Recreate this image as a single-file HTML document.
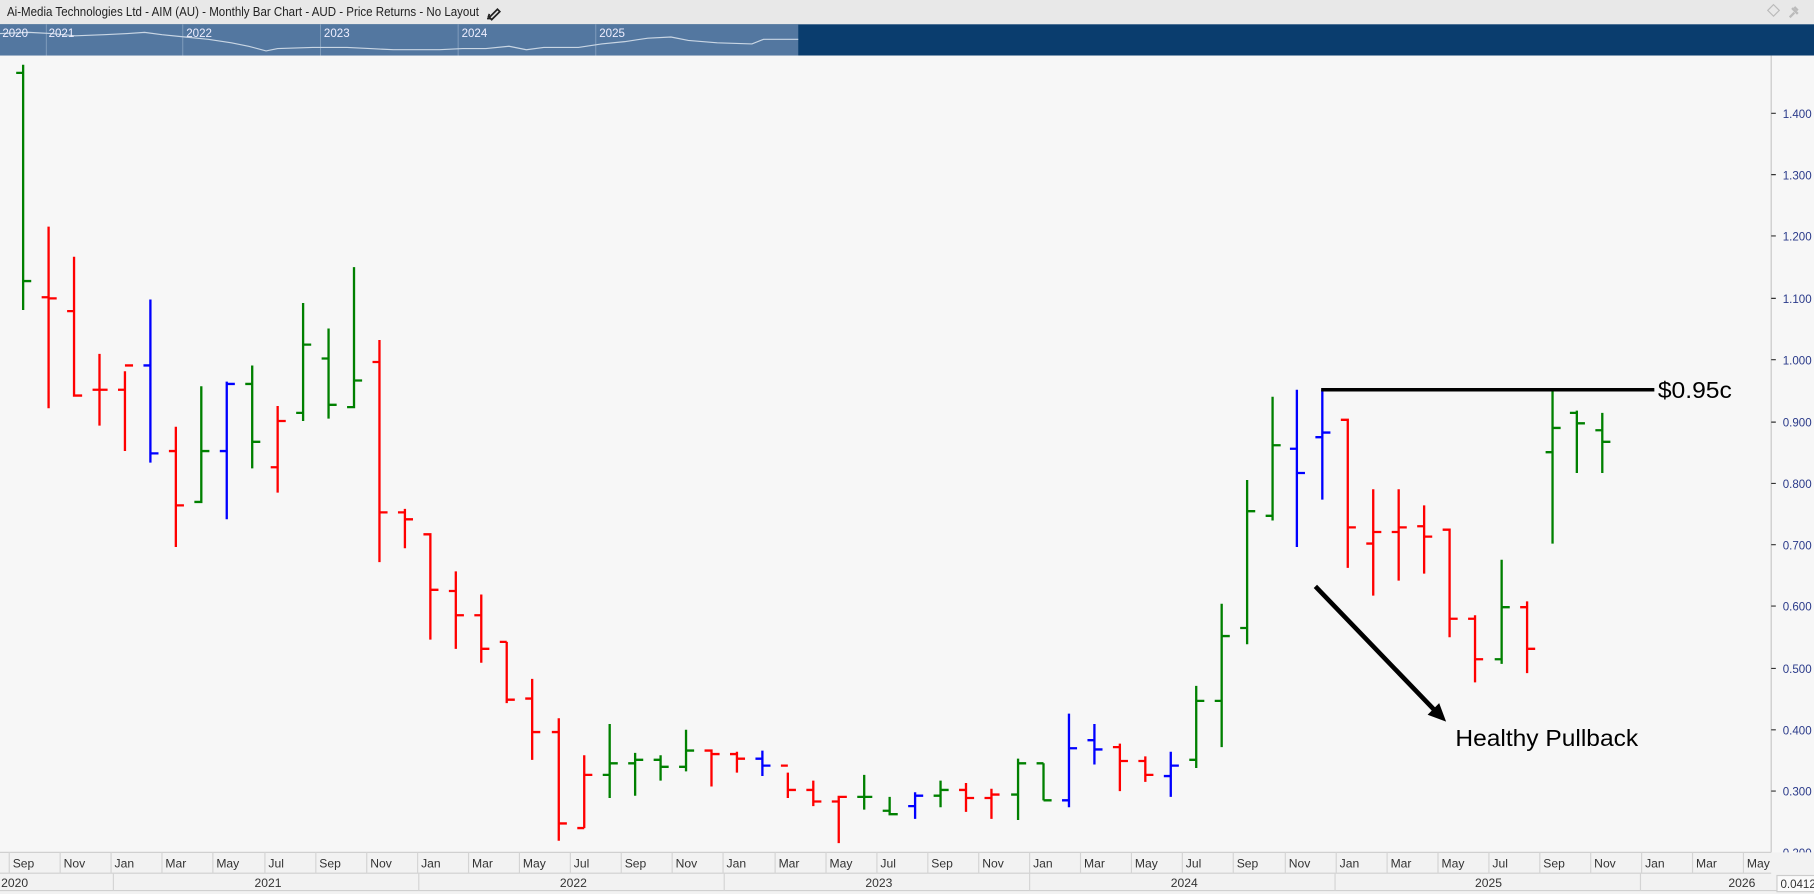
<!DOCTYPE html>
<html><head><meta charset="utf-8"><style>
html,body{margin:0;padding:0;width:1814px;height:894px;overflow:hidden;background:#f7f7f7}
svg{display:block}
text{font-family:"Liberation Sans",sans-serif}
</style></head><body>
<svg width="1814" height="894" viewBox="0 0 1568 773" preserveAspectRatio="none" xmlns="http://www.w3.org/2000/svg">
<rect x="0" y="0" width="1568" height="773" fill="#f7f7f7"/>
<rect x="0" y="0" width="1568" height="21" fill="#e8e8e8"/>
<text x="6" y="14" font-size="11.5" fill="#222" textLength="408" lengthAdjust="spacingAndGlyphs">Ai-Media Technologies Ltd - AIM (AU) - Monthly Bar Chart - AUD - Price Returns - No Layout</text>
<path d="M423 15l7-7 2 2-7 7zM421 16h3M422 15l1-3" stroke="#222" stroke-width="1.5" fill="none"/>
<path d="M1533 4l5 5-5 5-5-5z" stroke="#bbb" fill="none"/>
<path d="M1547 15l4-4M1549 7l5 5M1551 6l3 3" stroke="#bbb" stroke-width="2"/>
<rect x="0" y="21" width="1568" height="27" fill="#0a3d6e"/>
<rect x="0" y="21" width="690" height="27" fill="#5377a0"/>
<g stroke="#8aa4c2" stroke-width="0.7"><path d="M40 21V48M158 21V48M277 21V48M396 21V48M515 21V48"/></g>
<path d="M0 29 L25 28 L45 29 L65 31 L90 30 L110 29 L125 28 L140 30 L160 32 L180 34 L200 37 L215 40 L230 44 L240 42 L270 41 L300 41 L320 42 L340 43 L360 43 L380 43 L400 42 L420 42 L440 40 L455 43 L470 41 L500 41 L520 38 L540 36 L560 33 L580 32 L595 35 L620 37 L650 38 L660 34 L690 34" stroke="#c9d6e4" stroke-width="1" fill="none"/>
<g font-size="10" fill="#eef">
<text x="2" y="32">2020</text><text x="42" y="32">2021</text><text x="161" y="32">2022</text><text x="280" y="32">2023</text><text x="399" y="32">2024</text><text x="518" y="32">2025</text></g>
<line x1="1531" y1="48" x2="1531" y2="737" stroke="#c8c8c8"/>
<g font-size="10" fill="#2a3a8a">
<text x="1541" y="102">1.400</text><text x="1541" y="155">1.300</text><text x="1541" y="208">1.200</text><text x="1541" y="262">1.100</text><text x="1541" y="315">1.000</text><text x="1541" y="369">0.900</text><text x="1541" y="422">0.800</text><text x="1541" y="475">0.700</text><text x="1541" y="528">0.600</text><text x="1541" y="582">0.500</text><text x="1541" y="635">0.400</text><text x="1541" y="688">0.300</text><text x="1541" y="741">0.200</text></g>
<g stroke="#333"><path d="M1531 98h4M1531 151h4M1531 204h4M1531 258h4M1531 311h4M1531 365h4M1531 418h4M1531 471h4M1531 524h4M1531 578h4M1531 631h4M1531 684h4"/></g>
<g fill="none" stroke-width="2">
<path stroke="#008000" d="M20 56V268M14 63H20M20 243H27 M174 334V435M168 434H174M174 390H181 M218 316V405M212 332H218M218 382H225 M262 262V364M256 357H262M262 298H269 M284 284V362M278 310H284M284 350H291 M306 231V353M300 352H306M306 329H313 M527 626V690M521 670H527M527 660H534 M549 651V688M543 660H549M549 657H556 M571 653V675M565 657H571M571 663H578 M593 631V667M587 663H593M593 649H600 M747 670V700M741 689H747M747 689H754 M769 689V705M763 701H769M769 704H776 M813 675V698M807 688H813M813 683H820 M880 656V709M874 687H880M880 660H887 M902 660V692M896 660H902M902 692H909 M1034 593V664M1028 657H1034M1034 606H1041 M1056 522V646M1050 606H1056M1056 550H1063 M1078 415V557M1072 543H1078M1078 442H1085 M1100 343V450M1094 446H1100M1100 385H1107 M1298 484V574M1292 570H1298M1298 525H1305 M1342 337V470M1336 391H1342M1342 370H1349 M1363 355V409M1357 357H1363M1363 366H1370 M1385 357V409M1379 372H1385M1385 382H1392"/>
<path stroke="#0000ff" d="M130 259V400M124 316H130M130 392H137 M196 330V449M190 390H196M196 332H203 M659 649V671M653 656H659M659 662H666 M791 685V708M785 697H791M791 688H798 M924 617V698M918 692H924M924 647H931 M946 626V661M940 640H946M946 648H953 M1012 650V689M1006 671H1012M1012 662H1019 M1121 337V473M1115 388H1121M1121 409H1128 M1143 337V432M1137 378H1143M1143 374H1150"/>
<path stroke="#ff0000" d="M42 196V353M36 257H42M42 258H49 M64 222V343M58 269H64M64 342H71 M86 306V368M80 337H86M86 337H93 M108 321V390M102 337H108M108 316H115 M152 369V473M146 390H152M152 437H159 M240 351V426M234 404H240M240 364H247 M328 294V486M322 313H328M328 443H335 M350 440V474M344 443H350M350 449H357 M372 461V553M366 462H372M372 510H379 M394 494V561M388 511H394M394 532H401 M416 514V573M410 532H416M416 561H423 M438 555V608M432 555H438M438 605H445 M460 587V657M454 604H460M460 633H467 M483 621V727M477 633H483M483 712H490 M505 653V716M499 716H505M505 670H512 M615 648V680M609 649H615M615 652H622 M637 650V668M631 652H637M637 656H644 M681 668V690M675 662H681M681 683H688 M703 675V697M697 683H703M703 693H710 M725 688V729M719 693H725M725 689H732 M835 677V702M829 683H835M835 690H842 M857 682V708M851 690H857M857 687H864 M968 643V684M962 646H968M968 658H975 M990 654V676M984 658H990M990 670H997 M1165 362V491M1159 363H1165M1165 456H1172 M1187 423V515M1181 470H1187M1187 460H1194 M1209 423V502M1203 460H1209M1209 456H1216 M1231 437V496M1225 455H1231M1231 464H1238 M1253 457V551M1247 458H1253M1253 535H1260 M1275 532V590M1269 535H1275M1275 570H1282 M1320 520V582M1314 525H1320M1320 561H1327"/>
</g>
<line x1="1142" y1="337" x2="1430" y2="337" stroke="#000" stroke-width="3"/>
<text x="1433" y="344" font-size="20" fill="#000" textLength="64" lengthAdjust="spacingAndGlyphs" font-family="DejaVu Sans,sans-serif">$0.95c</text>
<line x1="1137" y1="507" x2="1240" y2="614" stroke="#000" stroke-width="4"/>
<path d="M1250 624 L1234 618 L1244 608 Z" fill="#000"/>
<text x="1258" y="645" font-size="20" fill="#000" textLength="158" lengthAdjust="spacingAndGlyphs" font-family="DejaVu Sans,sans-serif">Healthy Pullback</text>
<rect x="0" y="737" width="1568" height="36" fill="#f2f2f2"/>
<g stroke="#d0d0d0"><path d="M0 737H1531M0 755H1531M0 770H1568"/></g>
<g stroke="#d4d4d4"><path d="M8 737v18M52 737v18M96 737v18M140 737v18M184 737v18M229 737v18M273 737v18M317 737v18M361 737v18M405 737v18M449 737v18M493 737v18M537 737v18M581 737v18M625 737v18M670 737v18M714 737v18M758 737v18M802 737v18M846 737v18M890 737v18M934 737v18M978 737v18M1022 737v18M1066 737v18M1111 737v18M1155 737v18M1199 737v18M1243 737v18M1287 737v18M1331 737v18M1375 737v18M1419 737v18M1463 737v18M1507 737v18 M98 755v15M362 755v15M626 755v15M890 755v15M1154 755v15M1418 755v15"/></g>
<g font-size="10.5" fill="#333">
<text x="11" y="750">Sep</text><text x="55" y="750">Nov</text><text x="99" y="750">Jan</text><text x="143" y="750">Mar</text><text x="187" y="750">May</text><text x="232" y="750">Jul</text><text x="276" y="750">Sep</text><text x="320" y="750">Nov</text><text x="364" y="750">Jan</text><text x="408" y="750">Mar</text><text x="452" y="750">May</text><text x="496" y="750">Jul</text><text x="540" y="750">Sep</text><text x="584" y="750">Nov</text><text x="628" y="750">Jan</text><text x="673" y="750">Mar</text><text x="717" y="750">May</text><text x="761" y="750">Jul</text><text x="805" y="750">Sep</text><text x="849" y="750">Nov</text><text x="893" y="750">Jan</text><text x="937" y="750">Mar</text><text x="981" y="750">May</text><text x="1025" y="750">Jul</text><text x="1069" y="750">Sep</text><text x="1114" y="750">Nov</text><text x="1158" y="750">Jan</text><text x="1202" y="750">Mar</text><text x="1246" y="750">May</text><text x="1290" y="750">Jul</text><text x="1334" y="750">Sep</text><text x="1378" y="750">Nov</text><text x="1422" y="750">Jan</text><text x="1466" y="750">Mar</text><text x="1510" y="750">May</text>
<text x="1" y="767">2020</text><text x="220" y="767">2021</text><text x="484" y="767">2022</text><text x="748" y="767">2023</text><text x="1012" y="767">2024</text><text x="1275" y="767">2025</text><text x="1494" y="767">2026</text>
</g>
<rect x="1536" y="757" width="34" height="14" fill="#fafafa" stroke="#ccc"/>
<text x="1539" y="768" font-size="10" fill="#333">0.0412</text>
</svg>
</body></html>
